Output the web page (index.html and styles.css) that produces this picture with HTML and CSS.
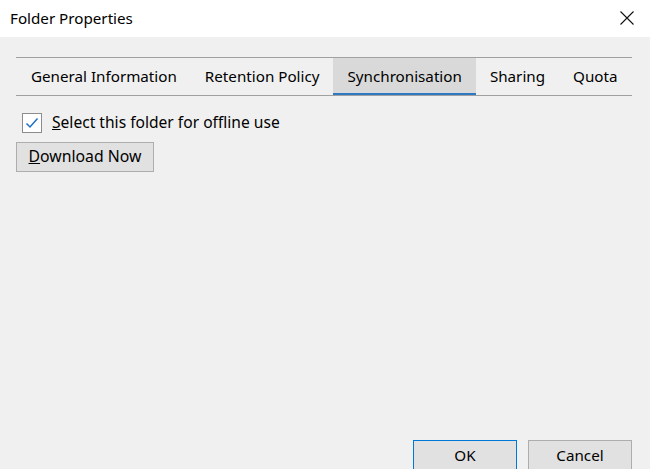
FILE: index.html
```html
<!DOCTYPE html>
<html>
<head>
<meta charset="utf-8">
<link rel="stylesheet" href="styles.css">
</head>
<body>
<div class="dialog">
  <div class="titlebar">
    <span class="title">Folder Properties</span>
    <span class="close" aria-label="Close">
      <svg width="14" height="14" viewBox="0 0 14 14"><path d="M0.5 0.5 L13.5 13.5 M13.5 0.5 L0.5 13.5" stroke="#111" stroke-width="1.1" fill="none"/></svg>
    </span>
  </div>
  <div class="content">
    <div class="tabs">
      <div class="tab">General Information</div>
      <div class="tab">Retention Policy</div>
      <div class="tab active">Synchronisation</div>
      <div class="tab">Sharing</div>
      <div class="tab">Quota</div>
    </div>
    <div class="panel">
      <label class="check">
        <span class="box">
          <svg width="14" height="12" viewBox="0 0 14 12"><path d="M1.5 6.5 L5 10 L12.5 1.5" stroke="#1f6fc5" stroke-width="1.5" fill="none"/></svg>
        </span>
        <span class="label"><u>S</u>elect this folder for offline use</span>
      </label>
      <button class="btn download"><u>D</u>ownload Now</button>
    </div>
    <div class="footer">
      <button class="btn ok">OK</button>
      <button class="btn cancel">Cancel</button>
    </div>
  </div>
</div>
</body>
</html>
```

FILE: styles.css
```css
html, body {
  margin: 0;
  padding: 0;
}
body {
  width: 650px;
  height: 469px;
  overflow: hidden;
  font-family: "Noto Sans", "Open Sans", sans-serif;
  font-size: 15.2px;
  color: #000;
  background: #f0f0f0;
}
.dialog {
  display: flex;
  flex-direction: column;
  height: 469px;
}
.titlebar {
  height: 37px;
  background: #fff;
  display: flex;
  align-items: center;
  justify-content: space-between;
  padding: 0 16px 0 10px;
  flex: none;
}
.title {
  font-size: 15.2px;
  color: #000;
  padding-bottom: 1px;
}
.close {
  display: flex;
  width: 14px;
  height: 14px;
  margin-bottom: 2px;
}
.content {
  flex: 1;
  display: flex;
  flex-direction: column;
  padding: 20px 18px 0 16px;
}
.tabs {
  display: flex;
  border-top: 1px solid #a0a0a0;
  border-bottom: 1px solid #a0a0a0;
  height: 37px;
  padding-left: 1px;
}
.tab {
  padding: 0 14px;
  display: flex;
  align-items: center;
  height: 37px;
  box-sizing: border-box;
  padding-bottom: 1px;
}
.tab.active {
  background: #d9d9d9;
  border-bottom: 2px solid #2f78c2;
  padding-bottom: 0;
  padding-top: 1px;
}
.panel {
  display: flex;
  flex-direction: column;
  align-items: flex-start;
  padding-top: 17px;
}
.check {
  display: flex;
  align-items: center;
  gap: 10px;
  margin-left: 6px;
  height: 20px;
}
.box {
  width: 20px;
  height: 20px;
  border: 1px solid #8c8c8c;
  background: #fff;
  display: flex;
  align-items: center;
  justify-content: center;
  box-sizing: border-box;
}
.label {
  padding-bottom: 2px;
  font-size: 15.6px;
}
.btn {
  font-family: inherit;
  font-size: 15.2px;
  color: #000;
  background: #e1e1e1;
  border: 1px solid #adadad;
  box-sizing: border-box;
  margin: 0;
  padding: 0;
  display: flex;
  align-items: center;
  justify-content: center;
}
.download {
  margin-top: 9px;
  width: 138px;
  height: 30px;
  padding-bottom: 2px;
  font-size: 15.8px;
}
.footer {
  margin-top: auto;
  display: flex;
  justify-content: flex-end;
  gap: 11px;
  height: 29px;
}
.footer .btn {
  width: 104px;
  height: 30px;
  flex: none;
  padding-bottom: 1px;
}
.ok {
  border-color: #0078d7;
  width: 103px;
}
```
